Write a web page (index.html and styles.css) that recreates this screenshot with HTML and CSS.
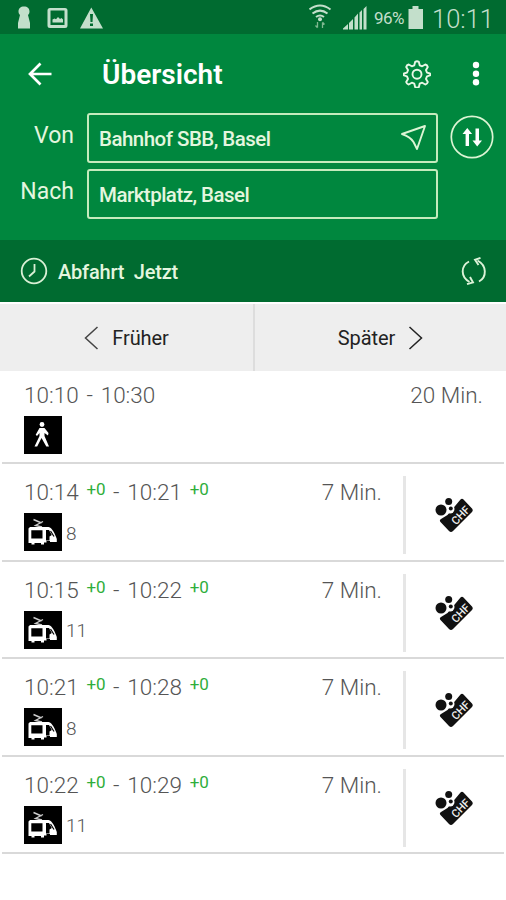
FILE: index.html
```html
<!doctype html>
<html lang="de">
    <head>
        <meta charset="utf-8">
        <title>Übersicht</title>
        <link rel="stylesheet" href="styles.css">
    </head>
    <body>
        <svg class="sprite">
            <symbol id="tram" viewBox="0 0 38 38">
                <rect width="38" height="38" fill="#000"/>
                <path d="M9.500 6.500l8 3.500M19 8.500l-7.500 4 6.500 1.500" fill="none" stroke="#ccc" stroke-width="1.400"/>
                <path fill-rule="evenodd" fill="#fff" d="M6 14h18.500c4 1 6.500 7 8.300 12v3H26v-1h-3.500v1.500H20V31.500h-3V30h-6.500v1.500h-3V30H4.500V15.500zM7.300 17.300v8.200h11.200v-8.200zM22 17v10.500h3.500v-4l2.300-1.500-2.800-5z"/>
                <path d="M26.500 18l3.500 5.500" stroke="#000" stroke-width="1.200"/>
            </symbol>
            <symbol id="ticket" viewBox="0 0 38 36">
                <path d="M12.500 19l13-15.500q1.500-1.500 3 0l8.500 9q1.500 1.800 0 3.400L18 35q-2 2-4 0l-8.500-9q-1.500-2 .5-3z" fill="#111"/>
                <circle cx="15" cy="13" r="4.500" fill="#fff"/>
                <circle cx="6" cy="14" r="7" fill="#fff"/>
                <circle cx="6" cy="14" r="5.500" fill="#111"/>
                <circle cx="13.700" cy="5.500" r="3.500" fill="#111"/>
                <circle cx="15.800" cy="12.500" r="2" fill="#111"/>
                <text class="ticket-text" x="0" y="0" transform="translate(21 29.500) rotate(-46)">CHF</text>
            </symbol>
        </svg>

        <div class="status">
            <svg class="status__left" width="110" height="34" viewBox="0 0 110 34">
                <path d="M24 6.500c3.500 0 5.500 2 5.500 5 0 1.500-.5 2.500-1.500 3.500l2 8v5.500H18V23l2-8c-1-1-1.500-2-1.500-3.500 0-3 2-5 5.500-5z"/>
                <path fill-rule="evenodd" d="M50 8h15q2.500 0 2.500 2.500v15q0 2.500-2.500 2.500H50q-2.500 0-2.500-2.500v-15Q47.500 8 50 8zm.5 2.500V25h14V10.500z"/>
                <path d="M52.500 22.500v-3l2-1 1.500.8 2-2.300 2 2 1.500-1 1.500 1.500v3z"/>
                <path fill-rule="evenodd" d="M91.300 7.500L103 28.500H80zM90 14l.5 8h2l.5-8zM90 23.500V26h3v-2.500z"/>
            </svg>
            <div class="status__right">
                <svg width="62" height="34" viewBox="0 0 62 34">
                    <g fill="none" stroke="#c3dfcb" stroke-width="2">
                        <path d="M.5 9.500q10.500-8 21 0M3.500 13.500q7.500-5.800 15 0M7 17q4-3 8 0"/>
                    </g>
                    <circle cx="11" cy="19.200" r="2"/>
                    <path d="M8.500 22v5.500M6.500 25.500l2 2.200M13.500 28v-5.500M15.500 24.500l-2-2.200" stroke="#7fb890" stroke-width="1.300" fill="none"/>
                    <path d="M34 29.500v-1l5-4.500v5.500zM40 29.500V23l4-4v10.500zM45.500 29.500v-12l3.500-4v16zM50.500 29.500V12.500l2.500-2.500v19.500zM54.500 29.500V9l3-3v23.500z"/>
                </svg>
                <span class="status__percent">96%</span>
                <svg width="16" height="34" viewBox="0 0 16 34"><path d="M.5 9H4.500V6h6v3h4.500v20H.5z"/></svg>
                <span class="status__time">10:11</span>
            </div>
        </div>

        <div class="header">
            <div class="toolbar">
                <svg class="toolbar__back" width="26" height="26" viewBox="0 0 26 26"><path d="M24.500 13H3M13.500 2.500L3 13l10.500 10.500" fill="none" stroke="#fff" stroke-width="2.700"/></svg>
                <h1 class="toolbar__title">Übersicht</h1>
                <svg class="toolbar__gear" width="28" height="28" viewBox="0 0 28 28">
                    <g fill="none" stroke="#e9f7e6" stroke-width="1.900" stroke-linejoin="round">
                        <path d="M12.200 1.800Q14 .8 15.800 1.800L16.700 5.300l2.500 1 3.100-1.800q2 .5 2.500 2.500l-1.800 3.100 1 2.500 3 .9q.8 1 0 1.900l-3 .9-1 2.600 1.800 3.100q-.5 2-2.500 2.500l-3.100-1.800-2.500 1-.9 3.500q-1.800.8-3.600 0l-.9-3.500-2.500-1-3.100 1.800q-2-.5-2.500-2.500l1.800-3.100-1-2.600-3-.9q-.8-1 0-1.900l3-.9 1-2.500-1.800-3.100q.5-2 2.500-2.500l3.100 1.800 2.500-1z"/>
                        <circle cx="14" cy="14.200" r="4.500"/>
                    </g>
                </svg>
                <svg class="toolbar__more" width="8" height="26" viewBox="0 0 8 26" fill="#fff"><circle cx="4" cy="4" r="3.200"/><circle cx="4" cy="12.700" r="3.200"/><circle cx="4" cy="21.300" r="3.200"/></svg>
            </div>
            <div class="search">
                <div class="search__labels">
                    <span>Von</span>
                    <span>Nach</span>
                </div>
                <div class="search__fields">
                    <div class="search__field">
                        <span>Bahnhof SBB, Basel</span>
                        <svg width="27" height="27" viewBox="0 0 27 27"><path d="M2 10L25 2l-8 23-3.500-7q-3-5-11.500-8z" fill="none" stroke="#dcf5d4" stroke-width="1.900" stroke-linejoin="round"/></svg>
                    </div>
                    <div class="search__field"><span>Marktplatz, Basel</span></div>
                </div>
                <svg class="search__swap" width="44" height="44" viewBox="0 0 44 44">
                    <circle cx="22" cy="22" r="20.700" fill="none" stroke="#dcf5d4" stroke-width="1.700"/>
                    <path d="M15.600 31V19H12.500L17.300 13l4.800 6H19V31zM25.500 13.500V25.500h-3l4.700 6L32 25.500h-3V13.500z" fill="#fff"/>
                </svg>
            </div>
        </div>

        <div class="departure">
            <svg width="28" height="28" viewBox="0 0 28 28" fill="none" stroke="#d9f0d5" stroke-width="1.800"><circle cx="14" cy="14" r="12.300"/><path d="M14.500 7v7.500l-5.500 5"/></svg>
            <span class="departure__text">Abfahrt&nbsp; Jetzt</span>
            <svg width="26" height="30" viewBox="0 0 26 30" fill="none" stroke="#dcf3d8" stroke-width="1.900">
                <path d="M8 5.500C-.5 10-.5 21 8.500 26M18 25.500c8-4.500 8-16-1.500-21"/>
                <path d="M19.500 1.800l-5.500 2 3.500 5.200M6 28.200l6-1.700-3-5.500"/>
            </svg>
        </div>

        <div class="pager">
            <div class="pager__btn">
                <svg width="15" height="24" viewBox="0 0 15 24"><path d="M13.500 1L1.500 12l12 11" fill="none" stroke="#444" stroke-width="1.500"/></svg>
                <span>Früher</span>
            </div>
            <div class="pager__btn">
                <span>Später</span>
                <svg width="15" height="24" viewBox="0 0 15 24"><path d="M1.500 1l12 11-12 11" fill="none" stroke="#222" stroke-width="1.500"/></svg>
            </div>
        </div>

        <ul class="trips">
            <li class="trip trip--walk">
                <div class="trip__main">
                    <div class="trip__row"><span class="trip__times">10:10 - 10:30</span><span>20 Min.</span></div>
                    <div class="trip__line">
                        <svg width="38" height="38" viewBox="0 0 38 38">
                            <rect width="38" height="38"/>
                            <circle cx="18" cy="8.500" r="2.400" fill="#fff"/>
                            <path d="M15.500 12h5l4 5-.5 2.500-3.500-2.500v3l4.500 10.500h-2.700L17.500 22l-4.300 8.500h-2.700L15.500 20v-3L13 20l-1.300-1.200z" fill="#fff"/>
                        </svg>
                    </div>
                </div>
            </li>
            <li class="trip">
                <div class="trip__main">
                    <div class="trip__row"><span class="trip__times">10:14 <i>+0</i> - 10:21 <i>+0</i></span><span>7 Min.</span></div>
                    <div class="trip__line"><svg width="38" height="38"><use href="#tram"/></svg><span>8</span></div>
                </div>
                <div class="trip__price"><svg width="38" height="36"><use href="#ticket"/></svg></div>
            </li>
            <li class="trip">
                <div class="trip__main">
                    <div class="trip__row"><span class="trip__times">10:15 <i>+0</i> - 10:22 <i>+0</i></span><span>7 Min.</span></div>
                    <div class="trip__line"><svg width="38" height="38"><use href="#tram"/></svg><span>11</span></div>
                </div>
                <div class="trip__price"><svg width="38" height="36"><use href="#ticket"/></svg></div>
            </li>
            <li class="trip">
                <div class="trip__main">
                    <div class="trip__row"><span class="trip__times">10:21 <i>+0</i> - 10:28 <i>+0</i></span><span>7 Min.</span></div>
                    <div class="trip__line"><svg width="38" height="38"><use href="#tram"/></svg><span>8</span></div>
                </div>
                <div class="trip__price"><svg width="38" height="36"><use href="#ticket"/></svg></div>
            </li>
            <li class="trip">
                <div class="trip__main">
                    <div class="trip__row"><span class="trip__times">10:22 <i>+0</i> - 10:29 <i>+0</i></span><span>7 Min.</span></div>
                    <div class="trip__line"><svg width="38" height="38"><use href="#tram"/></svg><span>11</span></div>
                </div>
                <div class="trip__price"><svg width="38" height="36"><use href="#ticket"/></svg></div>
            </li>
        </ul>
    </body>
</html>
```
FILE: styles.css
```css
* {
    box-sizing: border-box;
}

body {
    background: #fff;
    font-family: Roboto, sans-serif;
    height: 900px;
    margin: 0;
    overflow: hidden;
}

svg {
    display: block;
    flex: none;
}

.sprite {
    display: none;
}

.status {
    background: #006b30;
    color: #c3dfcb;
    display: flex;
    fill: #c3dfcb;
    height: 34px;
    justify-content: space-between;
}

.status__right {
    display: flex;
    padding-right: 12px;
}

.status__percent {
    font-size: 17px;
    letter-spacing: -0.5px;
    line-height: 37px;
    padding: 0 4px 0 3px;
}

.status__time {
    font-size: 25.5px;
    font-weight: 300;
    line-height: 39px;
    padding-left: 8px;
}

.header {
    background: #00873e;
    height: 206px;
}

.toolbar {
    align-items: center;
    display: flex;
    height: 79px;
    padding: 0 26px 0 27px;
}

.toolbar__title {
    color: #fff;
    flex-grow: 1;
    font-size: 28px;
    font-weight: 600;
    line-height: 32px;
    margin: 2px 0 0 49px;
}

.toolbar__more {
    margin-left: 41px;
}

.search {
    color: #e4f6df;
    display: flex;
    padding-right: 12px;
}

.search__labels {
    display: flex;
    flex-direction: column;
    font-size: 23px;
    gap: 12px;
    line-height: 44px;
    padding-top: 1px;
    text-align: right;
    width: 74px;
}

.search__fields {
    display: flex;
    flex-direction: column;
    flex-grow: 1;
    gap: 6px;
    margin: 0 12px 0 13px;
}

.search__field {
    align-items: center;
    border: 2px solid #c5ebbd;
    border-radius: 3px;
    display: flex;
    font-size: 20.5px;
    font-weight: 500;
    height: 50px;
    justify-content: space-between;
    letter-spacing: -0.52px;
    padding: 2px 9px 0 10px;
}

.search__field svg {
    margin-top: -4px;
}

.search__swap {
    margin-top: 2px;
}

.departure {
    align-items: center;
    background: #006b30;
    color: #e4f6df;
    display: flex;
    font-size: 20px;
    font-weight: 500;
    height: 62px;
    letter-spacing: -0.2px;
    padding: 0 19px 0 20px;
}

.departure__text {
    flex-grow: 1;
    padding: 2px 0 0 10px;
}

.pager {
    color: #222;
    display: flex;
    font-size: 20px;
    margin-top: 2px;
}

.pager__btn {
    align-items: center;
    background: #eee;
    display: flex;
    gap: 13px;
    height: 67px;
    justify-content: center;
    letter-spacing: -0.1px;
    width: 50%;
}

.pager__btn + .pager__btn {
    border-left: 2px solid #ddd;
}

.pager__btn span {
    padding-top: 1px;
}

.trips {
    color: #555;
    font-size: 22.5px;
    font-weight: 300;
    list-style: none;
    margin: 0 2px;
    padding: 0;
}

.trip {
    border-bottom: 2px solid #d9d9d9;
    display: flex;
    height: 97.5px;
    padding: 12px 0 6px 22px;
}

.trip--walk {
    height: 93px;
    padding: 8px 21px 0 22px;
}

.trip__main {
    flex-grow: 1;
}

.trip__row {
    display: flex;
    justify-content: space-between;
    line-height: 32px;
    padding-right: 21px;
}

.trip--walk .trip__row {
    padding-right: 0;
}

.trip__times {
    word-spacing: 2.3px;
}

.trip__row i {
    color: #2fae3b;
    font-size: 17px;
    font-style: normal;
    font-weight: 400;
    letter-spacing: -0.2px;
    line-height: 1;
    position: relative;
    top: -5px;
}

.trip__line {
    align-items: center;
    display: flex;
    font-size: 19px;
    gap: 4px;
    padding-top: 5px;
}

.trip__line span {
    padding-top: 2px;
}

.trip__price {
    border-left: 3px solid #e6e6e6;
    height: 78px;
    padding: 20px 0 0 29px;
    width: 101px;
}

.ticket-text {
    fill: #eee;
    font-family: Roboto, sans-serif;
    font-size: 11px;
    font-weight: 500;
}
```
